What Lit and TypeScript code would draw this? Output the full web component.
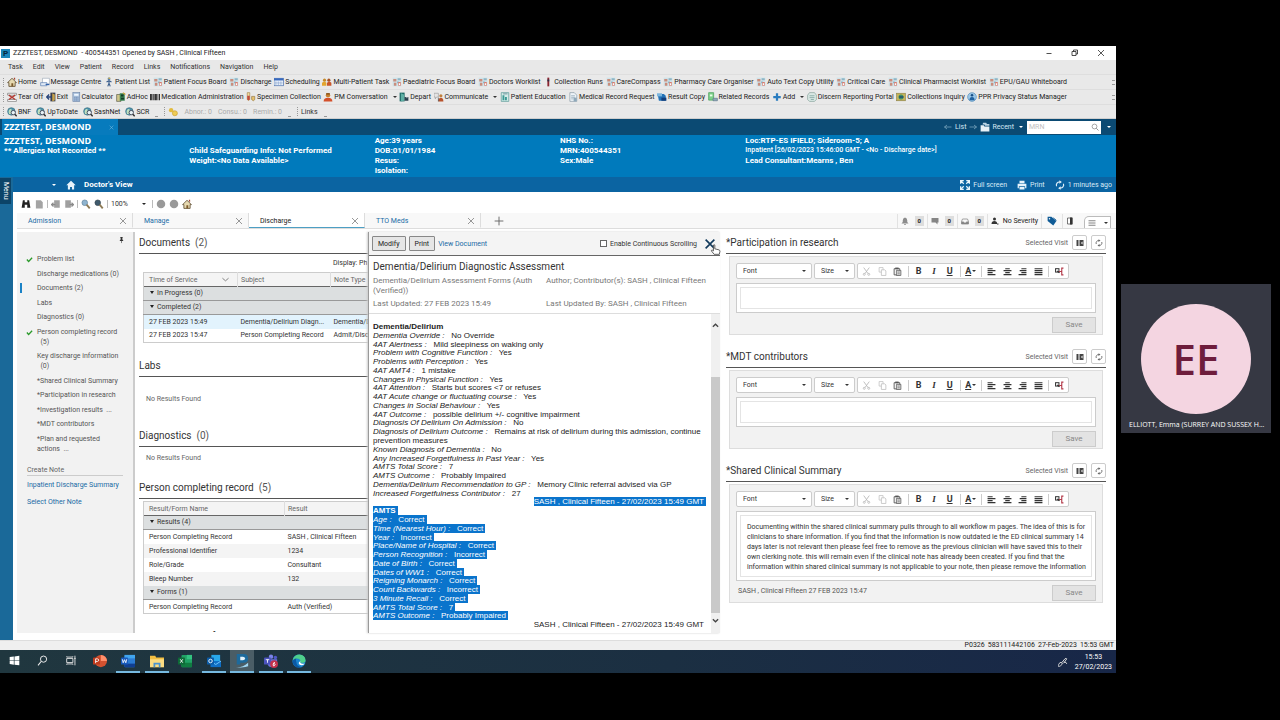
import { LitElement, html, css, svg, nothing } from "lit";
import { customElement, property } from "lit/decorators.js";

/* ---------- icons, all on a 16 x 16 grid ---------- */
const board = svg`<rect x="1" y="1" width="14" height="14" fill="#cfe3ea"/><path d="M2 3h5v4H2zM3 9h4v5H3z" fill="#c98d7c"/><path d="M9 2h5v3H9zM8 7h3v3H8z" fill="#8fb6c6"/><path d="M10 8h4v6h-4z" fill="#d97b6c"/><path d="M11 10h2v3h-2z" fill="#fff"/>`;
const globe = svg`<circle cx="7" cy="7" r="6" fill="#4d93ad" stroke="#386d7d"/><path d="M3 5c3-4 6-1 4 1s2 3-1 5-4-2-3-6z" fill="#bfe0c0"/><circle cx="10" cy="9" r="3.5" fill="#e6f1f5" stroke="#445" stroke-width="1.4"/><path d="M12.5 11.5l3 3.5" stroke="#333" stroke-width="2.4"/>`;
const page = svg`<path d="M3 1h7l4 4v10H3z" fill="#eef4f8" stroke="#7e929e"/><path d="M5 6h6M5 8.500h6M5 11h4" stroke="#7b97a8"/><path d="M9 9h5v6H9z" fill="#8fa9ba"/>`;

const ICONS: Record<string, unknown> = {
  board, globe, page,
  home: svg`<path d="M1 9L8 2l7 7h-2v6H3V9z" fill="#e6d9b0" stroke="#5b4a2c" stroke-width="1.300"/><path d="M7 10h3v5H7z" fill="#7b5a2c"/><path d="M11 1h2v4l-2-2z" fill="#a4432e"/>`,
  mail: svg`<path d="M4 2h11v9H4z" fill="#fff" stroke="#9aa7b5"/><path d="M1 9h10v5H1z" fill="#dfe9f5" stroke="#5277ad"/><path d="M9 12h6" stroke="#3463ab" stroke-width="2"/>`,
  person: svg`<circle cx="8" cy="3" r="2.200" fill="#5a7fa8"/><path d="M8 5v6M4 8l4-2 4 2M8 10l-2 5M8 10l2 5" stroke="#3b5f8e" stroke-width="1.800" fill="none"/><path d="M7 1h3v2H7z" fill="#d5b34a"/>`,
  cal: svg`<rect x="0" y="2" width="15" height="12" fill="#e8f0fa" stroke="#3c62a5"/><path d="M0 2h15v3.500H0z" fill="#3769bd"/><path d="M3 7v6M7 7v6M11 7v6M1 9.500h13" stroke="#8aa5cf"/>`,
  folk: svg`<circle cx="4" cy="5" r="2.500" fill="#c48a2a"/><circle cx="11" cy="5" r="2.500" fill="#a85424"/><path d="M0 14V9q4-3 7 0v5z" fill="#e3a52d"/><path d="M8 14V9q4-3 7 0v5z" fill="#c9572a"/>`,
  bar: svg`<path d="M7 1h3v14H7z" fill="#8b2631"/><path d="M7 4h3v3H7z" fill="#2c2c44"/>`,
  tear: svg`<path d="M1 2h14v3H1zM1 12h14v3H1z" fill="#fff" stroke="#666"/><path d="M3 5l10 7M13 5L3 12" stroke="#b33b34" stroke-width="2.200"/>`,
  exit: svg`<path d="M7 1h8v14H7z" fill="#3a3e50"/><path d="M10 2l4 2v9l-4 2z" fill="#c9a44c"/><path d="M1 8h8M5 4L1 8l4 4" stroke="#28457b" stroke-width="2.200" fill="none"/>`,
  calc: svg`<rect x="3" y="1" width="11" height="14" fill="#a9c1dd" stroke="#6983a7"/><path d="M5 3h7v3H5z" fill="#eef6ff"/><path d="M5 8.500h7M5 11h7M5 13h7" stroke="#5b79a5" stroke-dasharray="2 .6"/>`,
  adhoc: svg`<path d="M1 4h7v11H1z" fill="#cfc58a" stroke="#554"/><path d="M6 2h8v12H6z" fill="#3d8552"/><path d="M8 4h4v3H8zM8 9h5v3H8z" fill="#143d2a"/><path d="M11 1l4 3" stroke="#caa43c" stroke-width="2"/>`,
  code: svg`<path d="M0 3h3v10H0zM4 3h2v10H4zM7 3h4v10H7zM12 3h1v10h-1zM14 3h2v10h-2z" fill="#333"/>`,
  tube: svg`<path d="M2 1h4v11q-2 3-4 0z" fill="#f2d9a0" stroke="#a17f44"/><path d="M2 6h4v6q-2 2-4 0z" fill="#c54b3b"/><path d="M9 7h5v5q-2 4-5 0z" fill="#e8c26b" stroke="#8d7241"/>`,
  pm: svg`<circle cx="8" cy="5" r="3.500" fill="#c7812e"/><path d="M1 15q0-6 7-6t7 6z" fill="#d4512b"/><path d="M5 3h6" stroke="#7c4b1a" stroke-width="2"/>`,
  depart: svg`<path d="M1 1h8v14H1z" fill="#1d6a66"/><path d="M3 2l5 2v10l-5 1z" fill="#5fb0a5"/><path d="M9 8h6v6H9z" fill="#2b3f4e"/><path d="M11 9h3" stroke="#ddd"/>`,
  talk: svg`<path d="M0 2h7v6H4l-2 3V8H0z" fill="#e5e5e5" stroke="#999"/><circle cx="11" cy="6" r="2.500" fill="#c0803e"/><path d="M7 15q0-6 4-6t4 6z" fill="#b8532c"/><path d="M7 9v6" stroke="#333"/>`,
  edu: svg`<path d="M2 1h12v14H2z" fill="#d3ece8" stroke="#4a8f8c"/><path d="M4 5h3v8H4zM8 8h3v5H8z" fill="#3d9a94"/><path d="M5 3h7" stroke="#467"/>`,
  copy: svg`<path d="M1 3h10l3 3v8H3z" fill="#2573b7"/><path d="M0 2h8v5H0z" fill="#7cb5dd"/><path d="M7 9h8v5H7z" fill="#133f7c"/>`,
  rel: svg`<path d="M1 1h8v12H1z" fill="#7dd08a" stroke="#3d9650"/><path d="M3 4h4v3H3z" fill="#e8ffe9"/><path d="M8 10h7v4H8z" fill="#90a9bb" stroke="#5a7387"/>`,
  plus: svg`<path d="M8 2v12M2 8h12" stroke="#2b7dc0" stroke-width="3.600"/>`,
  disc: svg`<path d="M4 1h8l3 4v7l-3 3H4l-3-3V5z" fill="#d9e8e4" stroke="#7d9a94"/><path d="M4 6h8M4 9h8M6 12h5" stroke="#64908a"/>`,
  coll: svg`<rect x="1" y="2" width="14" height="12" fill="#c6b357" stroke="#8a8148"/><circle cx="8" cy="8" r="4" fill="#3f8f6a"/><path d="M5 8h7" stroke="#1f3f6b" stroke-width="2"/>`,
  ppr: svg`<circle cx="8" cy="8" r="7" fill="#9ac7e8" stroke="#4e88b6"/><circle cx="8" cy="5" r="2" fill="#184f86"/><path d="M4 13q0-5 4-5t4 5z" fill="#2062a0"/>`,
  keys: svg`<circle cx="5" cy="5" r="3.500" fill="#e2bb3e"/><circle cx="11" cy="10" r="4" fill="#edcb55" stroke="#c79c28"/>`,
  binoc: svg`<path d="M3 2h3v3h4V2h3l2 12h-5V9H6v5H1z" fill="#222"/>`,
  doc: svg`<path d="M3 2h8l3 3v10H3z" fill="#a4a4a4"/>`,
  docl: svg`<path d="M5 2h9v12H5z" fill="#a0a0a0"/><path d="M1 9h6M4 6L1 9l3 3" stroke="#8a8a8a" stroke-width="2" fill="none"/>`,
  docr: svg`<path d="M2 2h9v12H2z" fill="#a0a0a0"/><path d="M9 9h6M12 6l3 3-3 3" stroke="#8a8a8a" stroke-width="2" fill="none"/>`,
  lensOut: svg`<circle cx="6" cy="6" r="4.500" fill="#8fb4cf" stroke="#5d7f99"/><path d="M9 9l5 6" stroke="#8d7a55" stroke-width="3"/>`,
  lens: svg`<circle cx="6" cy="6" r="4.500" fill="#3f5a6c" stroke="#33414b"/><path d="M9 9l5 6" stroke="#8d7a55" stroke-width="3"/>`,
  dot: svg`<circle cx="8" cy="8" r="6.800" fill="#999"/>`,
  bell: svg`<path d="M8 1q4.500 1 4.500 6v3l2.500 3H1l2.500-3V7q0-5 4.500-6zM6 14h4v1.500H6z" fill="#8c8c8c"/>`,
  chat: svg`<path d="M1 2h14v9h-2v4l-4-4H1z" fill="#858585"/>`,
  tray: svg`<path d="M3 4h10l2 5v5H1V9z" fill="none" stroke="#858585" stroke-width="1.500"/><path d="M1 9h4l1 2h4l1-2h4v5H1z" fill="#858585"/>`,
  sever: svg`<circle cx="7" cy="4" r="3" fill="#333"/><path d="M1 14q0-6 6-6 4 0 5 3v3z" fill="#333"/><path d="M12 14h3" stroke="#333" stroke-width="2"/>`,
  tag: svg`<path d="M1 1h6l8 7-5 7-9-7z" fill="#0f5b96"/><circle cx="4" cy="4.500" r="1.200" fill="#fff"/><path d="M10 3l5 4" stroke="#0f5b96" stroke-width="1.500"/>`,
  door: svg`<path d="M3 2h9v12H3z" fill="#fff" stroke="#555" stroke-width="1.600"/><path d="M8 1h5v14H8z" fill="#333"/>`,
  full: svg`<path d="M1 6V1h5M10 1h5v5M15 10v5h-5M6 15H1v-5M1 1l5 5M15 1l-5 5M15 15l-5-5M1 15l5-5" stroke="currentColor" stroke-width="2" fill="none"/>`,
  print: svg`<path d="M4 1h8v4H4zM1 6h14v7h-2v-3H3v3H1zM4 11h8v4H4z" fill="currentColor"/>`,
  cycle: svg`<path d="M2.500 10A5 5 0 0 1 8 3.200M13.500 6A5 5 0 0 1 8 12.800" stroke="currentColor" stroke-width="1.800" fill="none"/><path d="M7 .500l4 2.600-4 3zM9 15.500L5 13l4-3z" fill="currentColor"/>`,
  house: svg`<path d="M8 1l7.500 7.500H13V15H9.500v-4h-3v4H3V8.500H.500z" fill="currentColor"/>`,
  folder: svg`<path d="M1 5h5l1 2h8v8H1z" fill="#e8f1f7"/><path d="M5 1h5l1 2h4v3H8L7 4H4z" fill="#b9d3e4"/>`,
  search: svg`<circle cx="7" cy="7" r="4.800" fill="none" stroke="currentColor" stroke-width="1.500"/><path d="M10.500 10.500l4.500 4.500" stroke="currentColor" stroke-width="1.800"/>`,
  pin: svg`<path d="M5 1h6v1.500l-1 .5v4l2 2v1H4V9l2-2V3l-1-.5z" fill="#333"/><path d="M8 10v5" stroke="#333" stroke-width="1.300"/>`,
  tick: svg`<path d="M2 8l4 4.500L14 4" fill="none" stroke="#2b9a2b" stroke-width="3"/>`,
  cross: svg`<path d="M2 2l12 12M14 2L2 14" stroke="currentColor" stroke-width="1.500" fill="none"/>`,
  bigx: svg`<path d="M1 1l14 14M15 1L1 15" stroke="#123a5c" stroke-width="2.600" fill="none"/>`,
  hand: svg`<path d="M5 1.500q1.500-1 2 0V7l6 1.500q1.500.5 1.500 2L13.500 15H6L2 10q0-1.500 1.500-1L5 10z" fill="#fff" stroke="#333" stroke-width="1.100"/>`,
  plusThin: svg`<path d="M8 1v14M1 8h14" stroke="#666" stroke-width="1.500"/>`,
  left: svg`<path d="M1 8h14M6 4L1 8l5 4" stroke="currentColor" stroke-width="1.500" fill="none"/>`,
  right: svg`<path d="M1 8h14M10 4l5 4-5 4" stroke="currentColor" stroke-width="1.500" fill="none"/>`,
  chev: svg`<path d="M1 5l7 6 7-6" stroke="#555" stroke-width="1.600" fill="none"/>`,
  up: svg`<path d="M2 11l6-6 6 6" stroke="#444" stroke-width="3" fill="none"/>`,
  down: svg`<path d="M2 5l6 6 6-6" stroke="#444" stroke-width="3" fill="none"/>`,
  min: svg`<path d="M3 9h10" stroke="#222" stroke-width="1.600"/>`,
  restore: svg`<path d="M2 5h8v8H2z" fill="none" stroke="#222" stroke-width="1.600"/><path d="M5 5V2h8v8h-3" fill="none" stroke="#222" stroke-width="1.600"/>`,
  cut: svg`<path d="M3 1l8 11M13 1L5 12" stroke="#b5b5b5" stroke-width="1.500"/><circle cx="4" cy="13" r="1.800" fill="none" stroke="#b5b5b5" stroke-width="1.300"/><circle cx="12" cy="13" r="1.800" fill="none" stroke="#b5b5b5" stroke-width="1.300"/>`,
  dup: svg`<path d="M2 1h7v8H2z" fill="#fff" stroke="#c2c2c2" stroke-width="1.400"/><path d="M6 5h6l2 2v8H6z" fill="#fff" stroke="#bdbdbd" stroke-width="1.400"/>`,
  paste: svg`<path d="M2 3h10v11H2z" fill="#fff" stroke="#555" stroke-width="1.600"/><path d="M4 1h6v3H4z" fill="#555"/><path d="M6 6h8v9H6z" fill="#ddd" stroke="#555" stroke-width="1.300"/><path d="M8 9h4M8 12h4" stroke="#555"/>`,
  al: svg`<path d="M1 3h9M1 6.500h14M1 10h9M1 13.500h14" stroke="#333" stroke-width="2"/>`,
  ac: svg`<path d="M4 3h8M1 6.500h14M4 10h8M1 13.500h14" stroke="#333" stroke-width="2"/>`,
  ar: svg`<path d="M6 3h9M3 6.500h12M6 10h9M1 13.500h14" stroke="#333" stroke-width="2"/>`,
  aj: svg`<path d="M1 3h14M1 6.500h14M1 10h14M1 13.500h14" stroke="#333" stroke-width="2"/>`,
  lines: svg`<path d="M1 3.500h14M1 8h14M1 12.500h14" stroke="#777" stroke-width="1.800"/>`,
  branch: svg`<rect x="1" y="3" width="6" height="6" fill="none" stroke="#333" stroke-width="1.800"/><path d="M4 7l4 3" stroke="#333" stroke-width="2.500"/><path d="M15 2h-3v12h3M12 8H7" stroke="#b33a4a" stroke-width="2" fill="none"/>`,
  side: svg`<path d="M1 2h3v12H1zM5 2h2v12H5zM8 2h7v12H8z" fill="#444"/><path d="M13 5l-3 3 3 3z" fill="#fff"/>`,
  win: svg`<path d="M1 3l6-1v5.500H1zM8 2l7-1v6.500H8zM1 8.500h6V14l-6-1zM8 8.500h7V15l-7-1z" fill="#fff"/>`,
  find: svg`<circle cx="9.500" cy="6" r="4.500" fill="none" stroke="#eee" stroke-width="1.400"/><path d="M6 9.500L1.500 15" stroke="#eee" stroke-width="1.500"/>`,
  task: svg`<path d="M1 5h9v6H1zM1 2v1h9V2M1 14v-1h9v1M13 1v14M12 5h2" fill="none" stroke="#e6e6e6" stroke-width="1.300"/>`,
  ppt: svg`<circle cx="9" cy="8" r="7" fill="#d35230"/><path d="M9 1a7 7 0 0 1 7 7H9z" fill="#ff8f6b"/><rect x="0" y="4" width="8" height="8" rx="1" fill="#c03a1c"/><path d="M3 10.500V5.500h2q1.500.2 1.500 1.500T5 8.500H3" stroke="#fff" fill="none"/>`,
  word: svg`<rect x="4" y="1" width="12" height="14" rx="1" fill="#2b7cd3"/><path d="M4 1h12v4H4z" fill="#41a5ee"/><path d="M4 11h12v4H4z" fill="#103f91"/><rect x="0" y="4" width="8" height="8" rx="1" fill="#185abd"/><path d="M1.500 6l1 4L4 6.500 5.500 10l1-4" stroke="#fff" fill="none"/>`,
  files: svg`<path d="M0 2h6l1 2h9v11H0z" fill="#f3bf42"/><path d="M0 6h16v9H0z" fill="#fcdc82"/><path d="M4 10h8v5h-2v-3H6v3H4z" fill="#4a93cf"/>`,
  excel: svg`<rect x="4" y="1" width="12" height="14" rx="1" fill="#21a366"/><path d="M10 1h6v5h-6z" fill="#33c481"/><path d="M4 10h12v5H4z" fill="#107c41"/><rect x="0" y="4" width="8" height="8" rx="1" fill="#0e6b37"/><path d="M2.500 6l3 4M5.500 6l-3 4" stroke="#fff"/>`,
  outlook: svg`<rect x="5" y="1" width="10" height="9" fill="#28a8ea"/><path d="M4 8h12v7H4z" fill="#0f6fc6"/><path d="M4 8l6 4 6-4" stroke="#7dd0ff" fill="none"/><rect x="0" y="4" width="8" height="8" rx="1" fill="#0a5ca8"/><circle cx="4" cy="8" r="2" fill="none" stroke="#fff"/>`,
  power: svg`<path d="M2 0h8q5 0 5 5t-5 5H6v2H2z" fill="#1d6a9c"/><path d="M6 3h3q2.500 0 2.500 2T9 7H6z" fill="#e4f3fb"/><path d="M1 15q7 1 14-5v4q-4 2-14 1z" fill="#9fd6f2"/>`,
  teams: svg`<circle cx="8" cy="3" r="2.500" fill="#7b83eb"/><circle cx="13" cy="4" r="2" fill="#5059c9"/><path d="M4 6h11v5q-2 4-6 4t-5-4z" fill="#6870d8"/><rect x="0" y="4" width="8" height="8" rx="1" fill="#4b53bc"/><path d="M2 6.500h4M4 6.500V10" stroke="#fff"/><circle cx="11.500" cy="11.500" r="4.500" fill="#c4314b"/><path d="M12.500 9.500q-2 0-2 2.500t1.200 1.500 1-2-2.200 0" stroke="#fff" fill="none"/>`,
  edge: svg`<circle cx="8" cy="8" r="7.500" fill="#1a86d0"/><path d="M1 6Q3 .500 8.500.500 15 1 15.500 7q0 3-4 3-3 0-2-2 0-3-4-3-3 0-4.500 3z" fill="#4fd08c"/><path d="M5 9q0 5 6 6-8 2-10.500-6Q1 5 5 5 4 7 5 9z" fill="#0c59a4"/><path d="M9.500 8q-1 4 5 3-3 3-6 1-2-2 1-4z" fill="#fff"/>`,
  pen: svg`<path d="M1 12q2-5 5-3t-2 5-3-2zM6 9l5-6q2-2 3 0l-5 7M9 8q5 0 5 3" stroke="#ddd" stroke-width="1.500" fill="none"/>`,
};

@customElement("ui-icon")
export class UiIcon extends LitElement {
  @property() name = "";
  static styles = css`
    :host { display: inline-flex; flex: none; width: 10px; height: 10px; }
    svg { width: 100%; height: 100%; display: block; }
  `;
  render() {
    return html`<svg viewBox="0 0 16 16" aria-hidden="true">${ICONS[this.name]}</svg>`;
  }
}

/* ---------- a titled free-text section ---------- */
@customElement("note-editor")
export class NoteEditor extends LitElement {
  @property() heading = "";
  @property() text = "";
  @property() signed = "";
  static styles = css`
    :host { display: block; color: #333; }
    * { box-sizing: border-box; }
    button, select, textarea { font: inherit; color: inherit; margin: 0; }
    .head { display: flex; align-items: center; gap: 4px; height: 22px; border-bottom: 1px solid #555; }
    h2 { flex: 1; margin: 0; font-size: 10px; font-weight: 400; line-height: 20px; }
    .visit { color: #666; }
    .mini { width: 15px; height: 15px; padding: 0; display: grid; place-items: center; background: #fff; border: 1px solid #ccc; border-radius: 2px; }
    .mini ui-icon { width: 8px; height: 8px; color: #666; }
    .card { margin: 3px 3px 11px; padding: 6px 6px 1px; background: #f2f2f2; border: 1px solid #ddd; border-width: 0 1px 1px; box-shadow: 0 -1px #ddd; display: grid; gap: 4px; }
    .tools { display: flex; gap: 2px; height: 16px; }
    .pick { position: relative; display: flex; background: #fff; border: 1px solid #ccc; border-radius: 2px; }
    .pick.font { flex: 0 1 76px; }
    .pick.size { flex: 0 1 41px; }
    .pick select { width: 100%; appearance: none; border: 0; background: transparent; padding: 0 6px; }
    .pick::after, .caret::after { content: ""; border: 2px solid transparent; border-top-color: #333; border-bottom: 0; }
    .pick::after { position: absolute; right: 5px; top: 6px; pointer-events: none; }
    .set { flex: 0 1 212px; display: flex; align-items: center; justify-content: space-between; padding: 0 3px; background: #fff; border: 1px solid #ccc; border-radius: 2px; }
    .set button { border: 0; background: none; padding: 0; min-width: 11px; height: 12px; display: flex; align-items: center; justify-content: center; gap: 1px; font-size: 9px; line-height: 12px; font-weight: 700; }
    .set ui-icon { width: 9px; height: 9px; }
    .set .i { font-style: italic; font-family: "Liberation Serif", serif; }
    .set .u, .set .caret { text-decoration: underline; }
    .set hr { width: 1px; height: 11px; margin: 0; border: 0; background: #ccc; }
    .box { padding: 3px; background: #fff; border: 1px solid #ccc; }
    textarea { display: block; width: 100%; height: 22px; resize: none; border: 1px solid #e4e4e4; background: #fff; padding: 6px; line-height: 10px; overflow: hidden; outline: 0; }
    textarea.tall { height: 62px; white-space: pre; }
    .foot { display: flex; justify-content: space-between; }
    .signed { padding: 0 2px; line-height: 13px; color: #555; }
    .save { width: 44px; height: 16px; margin-left: auto; padding: 0; border: 1px solid #ccc; background: #e3e3e3; color: #888; font-size: 8px; }
  `;
  render() {
    const b = (name: string, label: string) => html`<button aria-label=${label}><ui-icon name=${name}></ui-icon></button>`;
    return html`
      <div class="head">
        <h2>${this.heading}</h2>
        <span class="visit">Selected Visit</span>
        <button class="mini" aria-label="Side panel"><ui-icon name="side"></ui-icon></button>
        <button class="mini" aria-label="Refresh"><ui-icon name="cycle"></ui-icon></button>
      </div>
      <div class="card">
        <div class="tools">
          <div class="pick font"><select aria-label="Font"><option>Font</option></select></div>
          <div class="pick size"><select aria-label="Size"><option>Size</option></select></div>
          <div class="set">
            ${b("cut", "Cut")}${b("dup", "Copy")}${b("paste", "Paste")}<hr />
            <button>B</button><button class="i">I</button><button class="u">U</button><hr />
            <button class="caret">A</button><hr />
            ${b("al", "Align left")}${b("ac", "Centre")}${b("ar", "Align right")}${b("aj", "Justify")}<hr />
            ${b("branch", "Insert reference")}
          </div>
        </div>
        <div class="box"><textarea class=${this.text ? "tall" : ""} aria-label=${this.heading} .value=${this.text}></textarea></div>
        <div class="foot">
          ${this.signed ? html`<span class="signed">${this.signed}</span>` : nothing}
          <button class="save">Save</button>
        </div>
      </div>`;
  }
}

type Tool = [icon: string, label: string, drop?: boolean];
const ROW1: Tool[] = [["home", "Home"], ["mail", "Message Centre"], ["person", "Patient List"], ["board", "Patient Focus Board"], ["board", "Discharge"], ["cal", "Scheduling"], ["folk", "Multi-Patient Task"], ["board", "Paediatric Focus Board"], ["board", "Doctors Worklist"], ["bar", "Collection Runs"], ["board", "CareCompass"], ["board", "Pharmacy Care Organiser"], ["board", "Auto Text Copy Utility"], ["board", "Critical Care"], ["board", "Clinical Pharmacist Worklist"], ["board", "EPU/GAU Whiteboard"]];
const ROW2: Tool[] = [["tear", "Tear Off"], ["exit", "Exit"], ["calc", "Calculator"], ["adhoc", "AdHoc"], ["code", "Medication Administration"], ["tube", "Specimen Collection"], ["pm", "PM Conversation", true], ["depart", "Depart"], ["talk", "Communicate", true], ["edu", "Patient Education"], ["page", "Medical Record Request"], ["copy", "Result Copy"], ["rel", "Related Records"], ["plus", "Add", true], ["disc", "Discern Reporting Portal"], ["coll", "Collections Inquiry"], ["ppr", "PPR Privacy Status Manager"]];
const ROW3: Tool[] = [["globe", "BNF"], ["globe", "UpToDate"], ["globe", "SashNet"], ["globe", "SCR"]];

const NAV: [label: string, state?: string][] = [["Problem list", "done"], ["Discharge medications (0)"], ["Documents (2)", "here"], ["Labs"], ["Diagnostics (0)"], ["Person completing record\n  (5)", "done"], ["Key discharge information\n  (0)"], ["*Shared Clinical Summary"], ["*Participation in research"], ["*Investigation results  ..."], ["*MDT contributors"], ["*Plan and requested\nactions  ..."]];

type Line = { k?: string; v?: string; kind?: "lead" | "sign"; sel?: boolean; wrap?: boolean };
const LINES: Line[] = [
  { v: "Dementia/Delirium", kind: "lead" },
  { k: "Dementia Override", v: "No Override" },
  { k: "4AT Alertness", v: "Mild sleepiness on waking only" },
  { k: "Problem with Cognitive Function", v: "Yes" },
  { k: "Problems with Perception", v: "Yes" },
  { k: "4AT AMT4", v: "1 mistake" },
  { k: "Changes in Physical Function", v: "Yes" },
  { k: "4AT Attention", v: "Starts but scores <7 or refuses" },
  { k: "4AT Acute change or fluctuating course", v: "Yes" },
  { k: "Changes in Social Behaviour", v: "Yes" },
  { k: "4AT Outcome", v: "possible delirium +/- cognitive impairment" },
  { k: "Diagnosis Of Delirium On Admission", v: "No" },
  { k: "Diagnosis of Delirium Outcome", v: "Remains at risk of delirium during this admission, continue\nprevention measures", wrap: true },
  { k: "Known Diagnosis of Dementia", v: "No" },
  { k: "Any Increased Forgetfulness in Past Year", v: "Yes" },
  { k: "AMTS Total Score", v: "7" },
  { k: "AMTS Outcome", v: "Probably Impaired" },
  { k: "Dementia/Delirium Recommendation to GP", v: "Memory Clinic referral advised via GP" },
  { k: "Increased Forgetfulness Contributor", v: "27" },
  { v: "SASH , Clinical Fifteen - 27/02/2023 15:49 GMT", kind: "sign", sel: true },
  { v: "AMTS", kind: "lead", sel: true },
  { k: "Age", v: "Correct", sel: true },
  { k: "Time (Nearest Hour)", v: "Correct", sel: true },
  { k: "Year", v: "Incorrect", sel: true },
  { k: "Place/Name of Hospital", v: "Correct", sel: true },
  { k: "Person Recognition", v: "Incorrect", sel: true },
  { k: "Date of Birth", v: "Correct", sel: true },
  { k: "Dates of WW1", v: "Correct", sel: true },
  { k: "Reigning Monarch", v: "Correct", sel: true },
  { k: "Count Backwards", v: "Incorrect", sel: true },
  { k: "3 Minute Recall", v: "Correct", sel: true },
  { k: "AMTS Total Score", v: "7", sel: true },
  { k: "AMTS Outcome", v: "Probably Impaired", sel: true },
  { v: "SASH , Clinical Fifteen - 27/02/2023 15:49 GMT", kind: "sign" },
];

const SUMMARY = `Documenting within the shared clinical summary pulls through to all workflow m pages. The idea of this is for
clinicians to share information. If you find that the information is now outdated ie the ED clinical summary 14
days later is not relevant then please feel free to remove as the previous clinician will have saved this to their
own clerking note. this will remain even if the clinical note has already been created. If you find that the
information within shared clinical summary is not applicable to your note, then please remove the information`;

@customElement("app-root")
export class AppRoot extends LitElement {
  static styles = css`
    :host { display: grid; grid-template-columns: minmax(0, 1fr) 150px; gap: 5px; align-items: center; min-height: 100vh; box-sizing: border-box; padding: 46px 9px 47px 0; background: #000; font: 7px/10px Roboto, "Noto Sans", sans-serif; color: #333; }
    * { box-sizing: border-box; }
    button, input, select { font: inherit; color: inherit; margin: 0; }
    button { padding: 0; border: 0; background: none; display: inline-flex; align-items: center; white-space: nowrap; }
    a { color: #1a6ba5; text-decoration: none; }
    h1, h2, ul, p { margin: 0; padding: 0; font-weight: 400; list-style: none; }
    .window { align-self: stretch; display: flex; flex-direction: column; background: #fff; min-width: 0; }

    .title { display: flex; align-items: center; gap: 3px; height: 14px; padding: 0 11px 0 1px; color: #222; white-space: pre; }
    .title h1 { flex: 1; font-size: 7px; line-height: 10px; }
    .logo { width: 9px; height: 9px; background: #1b86ba; color: #06263c; font-size: 8px; font-weight: 700; line-height: 9px; text-align: center; }
    .controls { display: flex; gap: 18px; }
    .controls ui-icon { width: 8px; height: 8px; }

    .menus { display: flex; gap: 10px; height: 14px; padding: 0 8px; background: #e8e8e8; }
    .bar { display: flex; align-items: center; height: 15px; background: #e9e9e9; border-top: 1px solid #dedede; padding: 0 1px 0 3px; }
    .bar .items { flex: 1; display: flex; justify-content: space-between; margin-right: 45px; }
    .bar.low { border-bottom: 1px solid #cfcfcf; }
    .bar.low .items { flex: none; gap: 5px; margin: 0; }
    .grip { width: 1px; height: 9px; margin-right: 3px; border-left: 1px dotted #999; }
    .tool { gap: 1px; color: #222; }
    .drop::after { content: ""; margin-left: 4px; border: 2px solid transparent; border-top-color: #333; border-bottom: 0; }
    .more { display: grid; gap: 3px; }
    .more i, .tiny { width: 3px; height: 1px; background: #999; }
    .tiny { align-self: flex-end; margin: 0 6px 1px; }
    .off { color: #aaa; display: flex; gap: 6px; align-items: center; }

    .tabs { display: flex; align-items: stretch; height: 16px; background: #0b4a73; color: #d6e8f3; padding-left: 2px; }
    .ptab { flex: 0 0 116px; display: flex; align-items: center; justify-content: space-between; padding: 0 4px 0 2px; background: #077bbd; color: #fff; }
    .name { font: 700 9px/10px "Open Sans", sans-serif; color: #fff; }
    .ptab ui-icon { width: 5px; height: 5px; color: #8cc7e8; }
    .seek { flex: 1; display: flex; justify-content: flex-end; align-items: center; gap: 3px; padding-right: 5px; }
    .seek button { gap: 2px; }
    .seek .drop::after { border-top-color: #fff; margin-left: 3px; }
    .seek .faint { color: #7fa9c2; width: 8px; }
    .mrn { width: 74px; height: 13px; display: flex; align-items: center; background: #fff; padding: 0 2px; margin-left: 1px; color: #888; }
    .mrn input { flex: 1; min-width: 0; border: 0; padding: 0; outline: 0; }
    .mrn input::placeholder { color: #c0c0c0; }
    .mrn ui-icon { width: 8px; height: 8px; }

    .banner { display: grid; grid-template-columns: repeat(6, minmax(0, 1fr)); height: 42px; padding: 1px 0 0 4px; background: #007abc; color: #fff; font-size: 8px; font-weight: 700; white-space: pre; }
    .banner small { font-size: 7px; font-weight: 500; line-height: 8px; display: block; padding-bottom: 2px; }
    .banner .skip { padding-top: 10px; }

    .work { flex: 1; display: flex; min-height: 0; }
    .rail { width: 13px; background: #1a6999; }
    .rail button { width: 11px; height: 26px; writing-mode: vertical-rl; justify-content: center; background: #0c4468; color: #fff; margin-top: 1px; }
    .main { flex: 1; min-width: 0; display: flex; flex-direction: column; }
    .view { display: flex; align-items: center; height: 15px; padding: 0 4px 0 35px; gap: 10px; background: #0b64a2; color: #d9ebf7; }
    .view .drop::after { border-top-color: #fff; }
    .view ui-icon { color: #e6f3fb; }
    .view strong { flex: 1; color: #fff; font-size: 8px; margin-left: -2px; }
    .view button { gap: 3px; }
    .viewer { display: flex; align-items: center; gap: 3px; height: 21px; padding: 2px 0 0 8px; }
    .viewer hr { width: 1px; height: 8px; border: 0; background: #bbb; margin: 0; }
    .viewer label { display: flex; align-items: center; position: relative; width: 38px; }
    .viewer select { appearance: none; border: 0; background: none; width: 100%; padding: 0; }
    .viewer label::after { content: ""; position: absolute; right: 3px; border: 2px solid transparent; border-top-color: #222; border-bottom: 0; pointer-events: none; }

    .pages { display: flex; height: 16px; margin-left: 4px; background: #f8f8f8; border-bottom: 1px solid #ddd; }
    .page { flex: 0 1 116px; display: flex; align-items: center; justify-content: space-between; padding: 1px 5px 0 11px; border-right: 1px solid #ddd; border-bottom: 1px solid transparent; color: #1a6ba5; }
    .page.on { color: #222; background: #fff; border-bottom-color: #4d9fc4; }
    .page ui-icon { width: 8px; height: 8px; color: #777; }
    .add { margin-left: 13px; }
    .flags { flex: 1; display: flex; justify-content: flex-end; align-items: center; gap: 3px; color: #222; }
    .flags button { gap: 4px; }
    .flags b { width: 9px; height: 10px; margin-left: 2px; background: #ddd; font-size: 6px; text-align: center; }
    .flags ui-icon { width: 8px; height: 8px; }
    .flags .mark { width: 10px; height: 10px; margin: 0 2px; }
    .flags hr { width: 1px; height: 14px; border: 0; margin: 0; background: #e2e2e2; }
    .burger { width: 27px; height: 12px; margin: 3px 5px 0 7px; justify-content: center; background: #fff; border: 1px solid #bbb; border-bottom: 0; border-radius: 5px 0 0 0; }

    .panes { flex: 1; display: grid; grid-template-columns: 118px minmax(0, 233fr) minmax(0, 352fr) minmax(0, 396fr); margin: 3px 0 7px 4px; min-height: 0; }
    .nav { background: #f2f2f2; border-right: 2px solid #ccc; padding: 4px 0; }
    .nav .pin { display: flex; width: 7px; height: 8px; margin: 0 0 10px 101px; }
    .nav ul { display: flex; flex-direction: column; justify-content: space-between; height: 200px; }
    .nav li { display: grid; grid-template-columns: 8px 1fr; gap: 3px; padding-left: 9px; white-space: pre; }
    .nav li a { color: #555; }
    .nav li ui-icon { width: 7px; height: 7px; margin: 2px 0 0; }
    .nav li.here { box-shadow: inset 3px 0 #f2f2f2, inset 5px 0 #1a82c6; }
    .make { margin: 11px 10px 0; display: grid; gap: 4px; }
    .make p { border-bottom: 1px solid #ccc; color: #666; }
    .make a + a { margin-top: 3px; }

    .mid { min-width: 0; overflow: hidden; height: 400px; padding-left: 4px; white-space: nowrap; }
    h2 { font-size: 10px; line-height: 22px; height: 22px; border-bottom: 1px solid #555; white-space: pre; color: #333; }
    h2 span { color: #555; }
    .show { line-height: 18px; padding-left: 194px; }
    .none { line-height: 14px; padding-left: 7px; color: #666; }
    .none.far { padding-top: 15px; padding-bottom: 19px; }
    .none.near { padding-top: 4px; padding-bottom: 12px; }
    table { border-collapse: collapse; table-layout: fixed; width: 100%; margin: 0 0 12px 4px; text-align: left; }
    .after { margin-top: 2px; }
    th, td { height: 14px; padding: 0 0 0 5px; font-weight: 400; border: 0; }
    th + th { padding-left: 3px; border-left: 1px solid #ddd; }
    td + td { padding-left: 3px; }
    thead tr { background: #f4f4f4; color: #666; border-top: 1px solid #ccc; border-bottom: 1px solid #666; }
    table tr > :first-child { border-left: 1px solid #ccc; }
    tbody { border-bottom: 1px solid #ccc; }
    .group td { background: #dcdfe0; border-bottom: 1px solid #999; line-height: 9px; }
    .group td::before { content: ""; display: inline-block; margin: 0 3px 1px 1px; border: 2px solid transparent; border-top: 3px solid #222; border-bottom: 0; }
    .c1 { width: 94px; }
    .c2 { width: 93px; }
    .c3 { width: 141px; }
    .hit { background: #e2f3fd; }
    .alt { background: #f4f4f4; }
    .sort { display: flex; justify-content: space-between; align-items: center; padding-right: 8px; }
    .sort ui-icon { width: 7px; height: 7px; }

    .doc { display: flex; flex-direction: column; border-left: 1px solid #999; box-shadow: -1px 0 2px #ccc; background: #fff; min-width: 0; z-index: 1; }
    .acts { display: flex; align-items: center; gap: 3px; height: 24px; padding: 0 5px 0 3px; background: #f4f4f4; border-bottom: 1px solid #666; }
    .push { height: 15px; padding: 0 5px; border: 1px solid #888; border-radius: 1px; background: #e6e6e6; color: #222; }
    .cont { flex: 1; display: flex; align-items: center; justify-content: flex-end; gap: 3px; }
    .cont input { appearance: none; width: 7px; height: 7px; border: 1px solid #666; background: #fff; }
    .close { position: relative; margin-left: 5px; }
    .close .hand { position: absolute; left: 5px; top: 3px; width: 11px; height: 15px; }
    .meta { display: grid; grid-template-columns: 173px 1fr; padding: 4px 5px 4px 4px; border-bottom: 1px solid #ddd; font-size: 8px; color: #777; row-gap: 3px; white-space: pre; }
    .meta h2 { grid-column: 1 / -1; height: 14px; line-height: 13px; border: 0; color: #333; margin-bottom: -1px; }
    .scroll { flex: 1; display: flex; min-height: 0; }
    .text { flex: 1; min-width: 0; display: grid; grid-template-rows: repeat(35, minmax(0, 1fr)); height: 307px; margin-top: 8px; padding: 0 7px 0 4px; font: 8px/9px "Liberation Sans", Arial, sans-serif; color: #222; white-space: pre; }
    .text .wrap { grid-row: span 2; }
    .text .sign { text-align: right; }
    .text .sel > span { display: inline-block; background: #0a74cc; color: #fff; padding-right: 2px; }
    .text .sign.sel { margin-right: -2px; }
    .track { flex: none; width: 9px; background: #f0f0f0; display: grid; grid-template-rows: 63px 236px 1fr; justify-items: center; }
    .track ui-icon { width: 7px; height: 7px; margin-top: 8px; }
    .track ui-icon:last-child { margin-top: 4px; }
    .thumb { width: 100%; background: #c9c9c9; }
    .right { padding: 0 10px 0 6px; min-width: 0; }

    .status { height: 10px; display: flex; justify-content: flex-end; gap: 3px; padding-right: 2px; background: #efefef; border-top: 1px solid #ddd; line-height: 9px; color: #222; }
    .task { display: flex; justify-content: space-between; height: 23px; background: linear-gradient(90deg, #20373f, #1b2f42 60%, #182748); color: #fff; }
    .task button { width: 24px; justify-content: center; border-bottom: 2px solid transparent; }
    .task ui-icon { width: 14px; height: 14px; }
    .task .thin { width: 11px; height: 11px; }
    .task .run { border-bottom-color: #76b9e0; }
    .task .now { background: #4a5d66; }
    .task .apps { flex: 0 1 311px; display: flex; justify-content: space-between; padding-left: 2px; }
    .clock { padding: 1px 4px 0 0; display: flex; gap: 7px; align-items: center; text-align: center; }
    .task .clock ui-icon { width: 10px; height: 10px; }

    .tile { align-self: center; height: 149px; margin-top: -2px; display: flex; flex-direction: column; align-items: center; background: #363843; color: #fff; }
    .face { flex: none; width: 110px; height: 110px; margin: 20px 0 6px; border-radius: 50%; display: grid; place-items: center; background: #f4d5e1; color: #6e1d3c; font: 600 42px/60px "Open Sans", sans-serif; }
    .who { width: 100%; padding: 0 1px 0 8px; font: 7px/10px "Open Sans", sans-serif; white-space: nowrap; }
  `;

  tool([icon, label, drop]: Tool) {
    return html`<button class="tool ${drop ? "drop" : ""}"><ui-icon name=${icon}></ui-icon>${label}</button>`;
  }

  bar(items: Tool[]) {
    return html`<div class="bar"><span class="grip"></span><div class="items">${items.map((t) => this.tool(t))}</div><span class="more"><i></i><i></i></span></div>`;
  }

  line(l: Line) {
    const body = l.k ? html`<em>${l.k} :</em>   ${l.v}` : l.kind === "lead" ? html`<b>${l.v}</b>` : l.v;
    return html`<div class="${l.kind ?? ""} ${l.sel ? "sel" : ""} ${l.wrap ? "wrap" : ""}"><span>${body}</span></div>`;
  }

  render() {
    return html`
      <div class="window">
        <header>
          <div class="title">
            <span class="logo">P</span>
            <h1>ZZZTEST, DESMOND  - 400544351 Opened by SASH , Clinical Fifteen</h1>
            <div class="controls">
              <button aria-label="Minimise"><ui-icon name="min"></ui-icon></button>
              <button aria-label="Restore"><ui-icon name="restore"></ui-icon></button>
              <button aria-label="Close"><ui-icon name="cross"></ui-icon></button>
            </div>
          </div>
          <div class="menus">${["Task", "Edit", "View", "Patient", "Record", "Links", "Notifications", "Navigation", "Help"].map((m) => html`<button>${m}</button>`)}</div>
          ${this.bar(ROW1)}${this.bar(ROW2)}
          <div class="bar low">
            <span class="grip"></span>
            <div class="items">${ROW3.map((t) => this.tool(t))}</div>
            <i class="tiny"></i><span class="grip"></span>
            <div class="off"><ui-icon name="keys"></ui-icon><span>Abnor.: 0</span><span>Consu.: 0</span><span>Remin.: 0</span></div>
            <i class="tiny"></i><span class="grip"></span>
            <button>Links</button><i class="tiny"></i>
          </div>
          <div class="tabs">
            <div class="ptab"><span class="name">ZZZTEST, DESMOND</span><ui-icon name="cross"></ui-icon></div>
            <div class="seek">
              <ui-icon class="faint" name="left"></ui-icon><span>List</span><ui-icon class="faint" name="right"></ui-icon>
              <button class="drop"><ui-icon name="folder"></ui-icon>Recent</button>
              <label class="mrn"><input placeholder="MRN" aria-label="MRN" /><ui-icon name="search"></ui-icon></label>
              <button class="drop" aria-label="Search options"></button>
            </div>
          </div>
          <div class="banner">
            <div><div class="name">ZZZTEST, DESMOND</div>** Allergies Not Recorded **</div>
            <div class="skip">Child Safeguarding Info: Not Performed<br />Weight:&lt;No Data Available&gt;</div>
            <div>Age:39 years<br />DOB:01/01/1984<br />Resus:<br />Isolation:</div>
            <div>NHS No.:<br />MRN:400544351<br />Sex:Male</div>
            <div>Loc:RTP-ES IFIELD; Sideroom-5; A<small>Inpatient [26/02/2023 15:46:00 GMT - &lt;No - Discharge date&gt;]</small>Lead Consultant:Mearns , Ben</div>
          </div>
        </header>

        <div class="work">
          <div class="rail"><button>Menu</button></div>
          <div class="main">
            <div class="view">
              <button class="drop" aria-label="History"></button>
              <ui-icon name="house"></ui-icon>
              <strong>Doctor's View</strong>
              <button><ui-icon name="full"></ui-icon>Full screen</button>
              <button><ui-icon name="print"></ui-icon>Print</button>
              <button><ui-icon name="cycle"></ui-icon>1 minutes ago</button>
            </div>
            <div class="viewer">
              <ui-icon name="binoc"></ui-icon><ui-icon name="doc"></ui-icon><hr />
              <ui-icon name="docl"></ui-icon><ui-icon name="docr"></ui-icon><hr />
              <ui-icon name="lensOut"></ui-icon><ui-icon name="lens"></ui-icon><hr />
              <label><select aria-label="Zoom"><option>100%</option></select></label><hr />
              <ui-icon name="dot"></ui-icon><ui-icon name="dot"></ui-icon><ui-icon name="home"></ui-icon>
            </div>
            <div class="pages">
              ${["Admission", "Manage", "Discharge", "TTO Meds"].map((p) => html`<div class="page ${p === "Discharge" ? "on" : ""}"><span>${p}</span><ui-icon name="cross"></ui-icon></div>`)}
              <button class="add" aria-label="Add page"><ui-icon name="plusThin"></ui-icon></button>
              <div class="flags">
                <hr /><button><ui-icon name="bell"></ui-icon><b>0</b></button>
                <hr /><button><ui-icon name="chat"></ui-icon><b>0</b></button>
                <hr /><button><ui-icon name="tray"></ui-icon><b>0</b></button>
                <hr /><button><ui-icon name="sever"></ui-icon>No Severity</button>
                <hr /><ui-icon class="mark" name="tag"></ui-icon><hr /><ui-icon name="door"></ui-icon>
                <button class="burger drop" aria-label="Page menu"><ui-icon name="lines"></ui-icon></button>
              </div>
            </div>

            <div class="panes">
              <nav class="nav">
                <ui-icon class="pin" name="pin"></ui-icon>
                <ul>${NAV.map(([label, st]) => html`<li class=${st ?? ""}>${st === "done" ? html`<ui-icon name="tick"></ui-icon>` : html`<span></span>`}<a href="#">${label}</a></li>`)}</ul>
                <div class="make"><p>Create Note</p><a href="#">Inpatient Discharge Summary</a><a href="#">Select Other Note</a></div>
              </nav>

              <div class="mid">
                <h2>Documents  <span>(2)</span></h2>
                <div class="show">Display: Ph</div>
                <table>
                  <colgroup><col class="c1" /><col class="c2" /><col /></colgroup>
                  <thead><tr><th><div class="sort">Time of Service<ui-icon name="chev"></ui-icon></div></th><th>Subject</th><th>Note Type</th></tr></thead>
                  <tbody>
                    <tr class="group"><td colspan="3">In Progress (0)</td></tr>
                    <tr class="group"><td colspan="3">Completed (2)</td></tr>
                    <tr class="hit"><td>27 FEB 2023 15:49</td><td>Dementia/Delirium Diagn...</td><td>Dementia/D</td></tr>
                    <tr><td>27 FEB 2023 15:47</td><td>Person Completing Record</td><td>Admit/Disc</td></tr>
                  </tbody>
                </table>
                <h2>Labs</h2>
                <p class="none far">No Results Found</p>
                <h2>Diagnostics  <span>(0)</span></h2>
                <p class="none near">No Results Found</p>
                <h2>Person completing record  <span>(5)</span></h2>
                <table class="after">
                  <colgroup><col class="c3" /><col /></colgroup>
                  <thead><tr><th>Result/Form Name</th><th>Result</th></tr></thead>
                  <tbody>
                    <tr class="group"><td colspan="2">Results (4)</td></tr>
                    <tr><td>Person Completing Record</td><td>SASH , Clinical Fifteen</td></tr>
                    <tr class="alt"><td>Professional Identifier</td><td>1234</td></tr>
                    <tr><td>Role/Grade</td><td>Consultant</td></tr>
                    <tr class="alt"><td>Bleep Number</td><td>132</td></tr>
                    <tr class="group"><td colspan="2">Forms (1)</td></tr>
                    <tr><td>Person Completing Record</td><td>Auth (Verified)</td></tr>
                  </tbody>
                </table>
                <h2>Key discharge information</h2>
              </div>

              <article class="doc">
                <div class="acts">
                  <button class="push">Modify</button><button class="push">Print</button>
                  <a href="#">View Document</a>
                  <label class="cont"><input type="checkbox" />Enable Continuous Scrolling</label>
                  <button class="close" aria-label="Close document"><ui-icon name="bigx"></ui-icon><ui-icon class="hand" name="hand"></ui-icon></button>
                </div>
                <div class="meta">
                  <h2>Dementia/Delirium Diagnostic Assessment</h2>
                  <p>Dementia/Delirium Assessment Forms (Auth<br />(Verified))</p><p>Author; Contributor(s): SASH , Clinical Fifteen</p>
                  <p>Last Updated: 27 FEB 2023 15:49</p><p>Last Updated By: SASH , Clinical Fifteen</p>
                </div>
                <div class="scroll">
                  <div class="text">${LINES.map((l) => this.line(l))}</div>
                  <div class="track"><ui-icon name="up"></ui-icon><span class="thumb"></span><ui-icon name="down"></ui-icon></div>
                </div>
              </article>

              <div class="right">
                <note-editor heading="*Participation in research"></note-editor>
                <note-editor heading="*MDT contributors"></note-editor>
                <note-editor heading="*Shared Clinical Summary" .text=${SUMMARY} signed="SASH , Clinical Fifteen 27 FEB 2023 15:47"></note-editor>
              </div>
            </div>
          </div>
        </div>

        <footer>
          <div class="status"><span>P0326</span><span>583111442106</span><span>27-Feb-2023</span><span>15:53 GMT</span></div>
          <div class="task">
            <div class="apps">
              ${[["win", "thin"], ["find", "thin"], ["task", "thin"], ["ppt", ""], ["word", "run"], ["files", "run"], ["excel", ""], ["outlook", "run"], ["power", "run now"], ["teams", "run"], ["edge", "run"]].map(([n, c]) => html`<button class=${c === "thin" ? "" : c} aria-label=${n}><ui-icon class=${c === "thin" ? "thin" : ""} name=${n}></ui-icon></button>`)}
            </div>
            <div class="clock"><ui-icon name="pen"></ui-icon><p>15:53<br />27/02/2023</p></div>
          </div>
        </footer>
      </div>

      <aside class="tile">
        <div class="face">EE</div>
        <div class="who">ELLIOTT, Emma (SURREY AND SUSSEX H...</div>
      </aside>`;
  }
}
